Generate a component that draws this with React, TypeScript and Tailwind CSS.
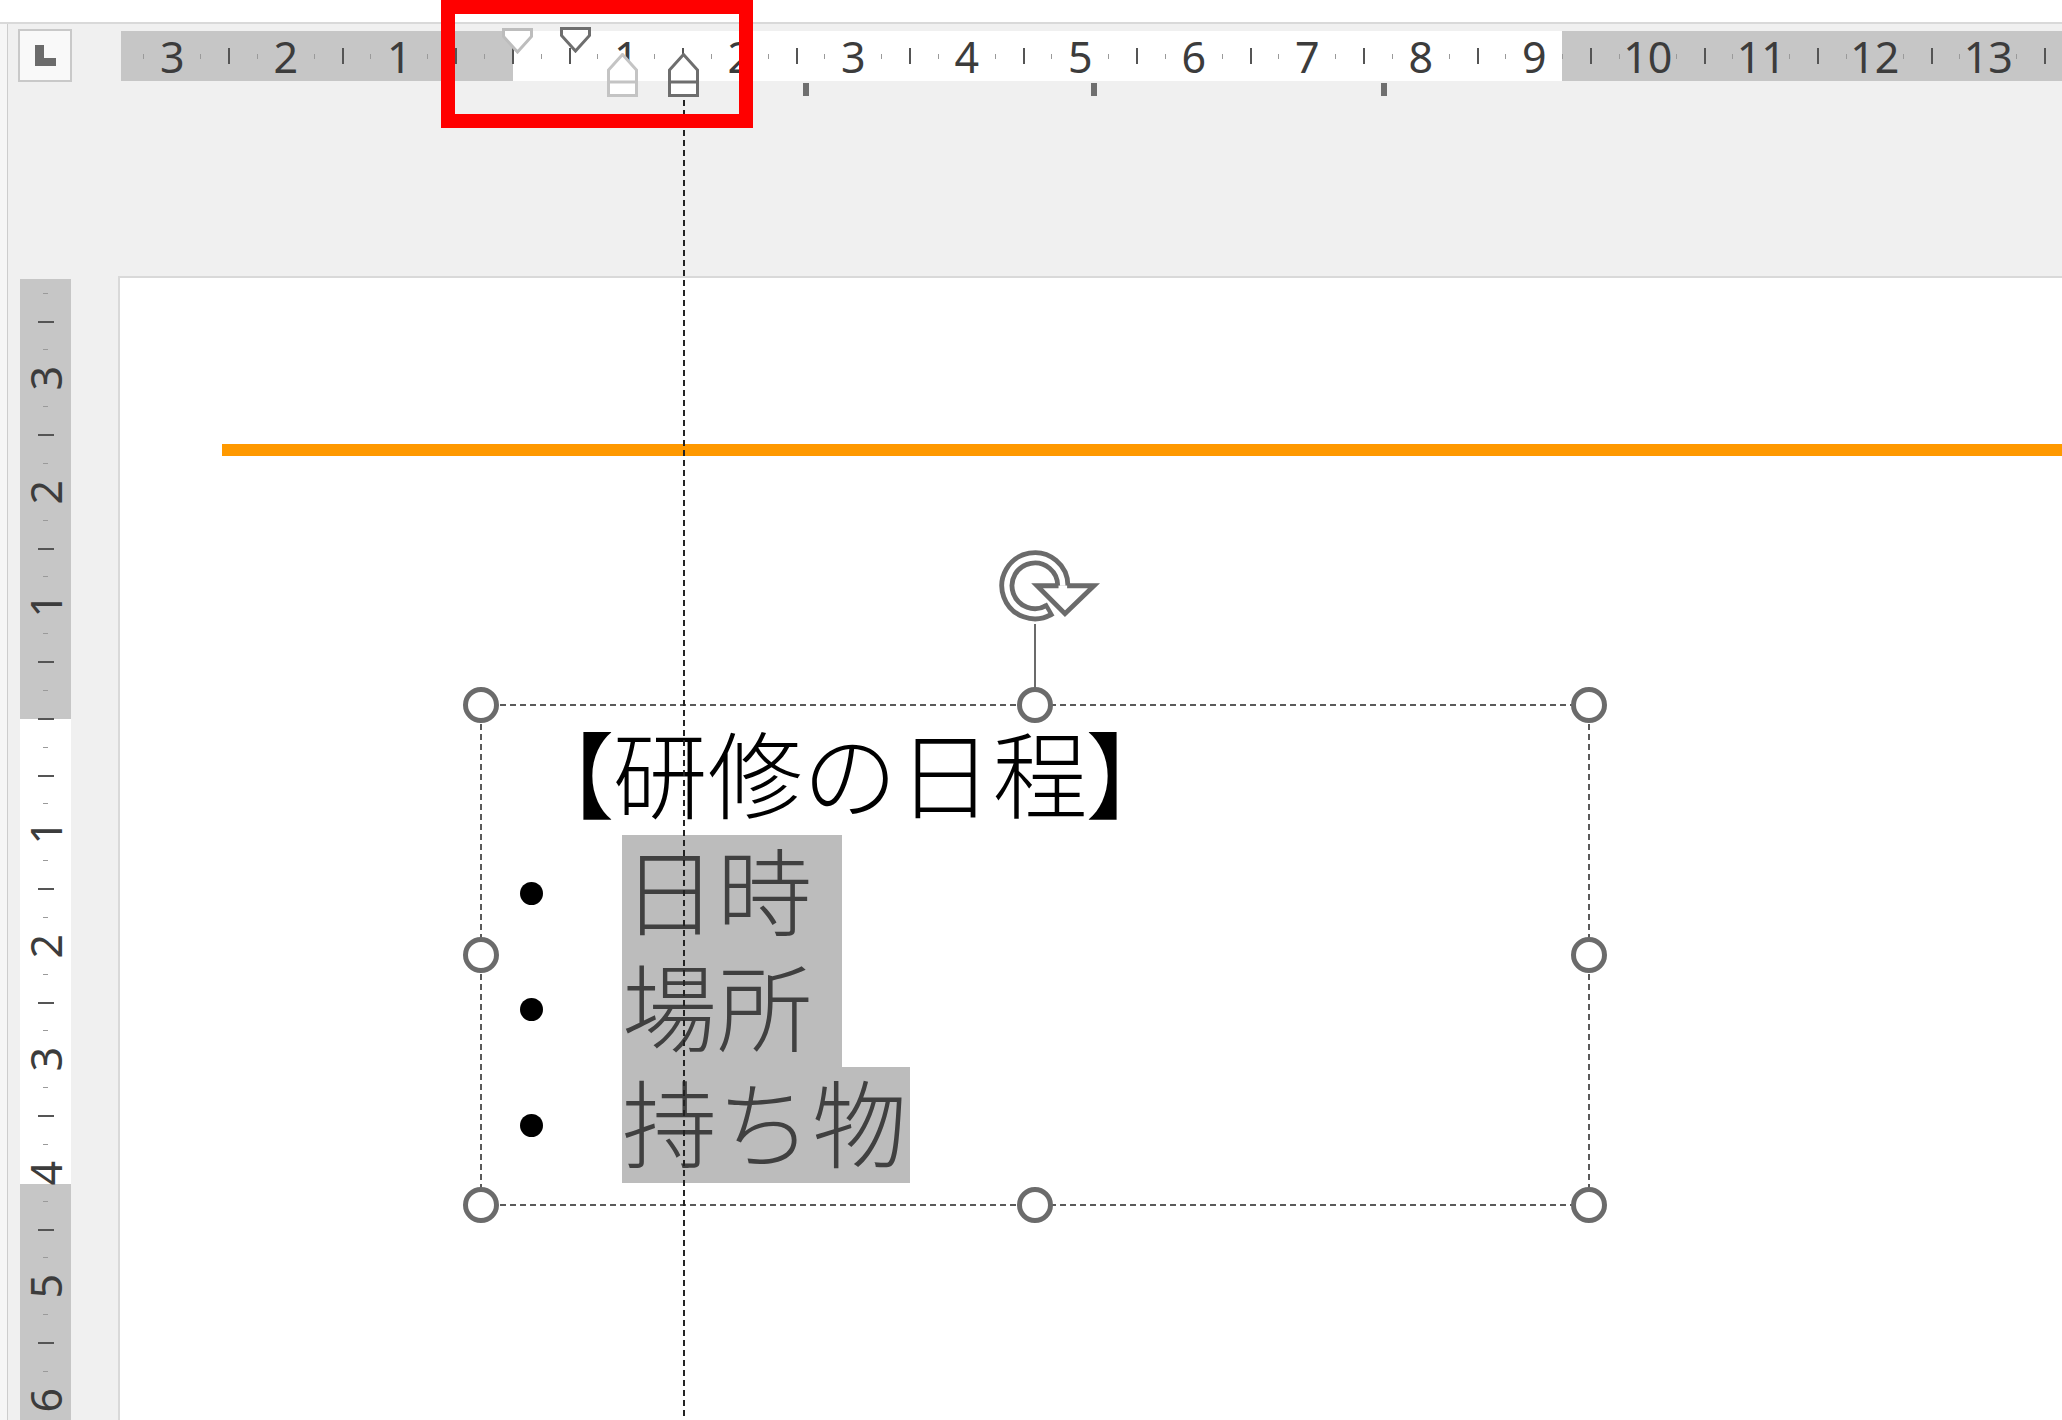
import React from 'react';

const hTicks = Array.from({ length: 68 }, (_, i) => -3.25 + i * 0.25);
const vTicks = Array.from({ length: 40 }, (_, i) => -3.75 + i * 0.25);

function HMark({ k }: { k: number }) {
  if (Number.isInteger(k) && k !== 0) {
    return (
      <span className="whitespace-nowrap text-[43px] leading-none text-[#3c3c3c] font-['Noto_Sans',sans-serif]">
        {Math.abs(k)}
      </span>
    );
  }
  if (Number.isInteger(k * 2)) return <div className="w-[2px] h-[16px] bg-[#555555]" />;
  return <div className="w-[1px] h-[5px] bg-[#9a9a9a]" />;
}

function VMark({ k }: { k: number }) {
  if (Number.isInteger(k) && k !== 0) {
    return (
      <div className="[writing-mode:vertical-rl] rotate-180 whitespace-nowrap text-[43px] leading-none text-[#3c3c3c] font-['Noto_Sans',sans-serif]">
        {Math.abs(k)}
      </div>
    );
  }
  if (Number.isInteger(k * 2)) return <div className="h-[2px] w-[16px] bg-[#555555]" />;
  return <div className="h-[1px] w-[5px] bg-[#9a9a9a]" />;
}

function DownMarker({ color }: { color: string }) {
  return (
    <svg width="31" height="26" viewBox="0 0 31 26">
      <path d="M1.5 1.5 H29.5 V8.5 L15.5 24 L1.5 8.5 Z" fill="#fff" stroke={color} strokeWidth="3" />
    </svg>
  );
}

function UpMarker({ color }: { color: string }) {
  return (
    <svg width="31" height="44" viewBox="0 0 31 44">
      <path d="M15.5 1.5 L29.5 17 V42.5 H1.5 V17 Z" fill="#fff" stroke={color} strokeWidth="3" />
      <path d="M1.5 29 H29.5" stroke={color} strokeWidth="3" />
    </svg>
  );
}

function Handle({ x, y }: { x: number; y: number }) {
  return (
    <div
      className="absolute w-[36px] h-[36px] rounded-full border-[5px] border-[#6b6b6b] bg-white"
      style={{ left: x, top: y }}
    />
  );
}

function RotateIcon() {
  return (
    <svg width="108" height="86" viewBox="0 0 100 80">
      <path d="M48 59.5 A26 26 0 1 1 61 37" fill="none" stroke="#6b6b6b" strokeWidth="14" />
      <path d="M48 59.5 A26 26 0 1 1 61 37" fill="none" stroke="#fff" strokeWidth="5" />
      <path d="M44.5 53.5 L51.5 65.6" stroke="#6b6b6b" strokeWidth="4" />
      <path d="M37 37 H90 L63 63 Z" fill="#fff" />
      <path d="M57 37 H37 L63 63 L90 37 H65" fill="none" stroke="#6b6b6b" strokeWidth="4.5" strokeLinejoin="miter" />
    </svg>
  );
}

const cjk = "font-['Noto_Sans_CJK_JP',sans-serif]";

const items = [
  { t: '日時', w: 'w-[220px]' },
  { t: '場所', w: 'w-[220px]' },
  { t: '持ち物', w: 'w-[288px]' },
];

export default function App() {
  return (
    <div className="relative w-[2062px] h-[1420px] overflow-hidden bg-[#f0f0f0] flex flex-col">
      {/* title strip */}
      <div className="h-[24px] shrink-0 bg-white border-b-2 border-[#d9d9d9]" />

      <div className="flex flex-1 min-h-0">
        {/* window frame */}
        <div className="w-[8px] shrink-0 bg-[#f6f6f6] border-r border-[#cdcdcd]" />

        <div className="flex-1 flex flex-col min-w-0">
          {/* horizontal ruler row */}
          <div className="h-[252px] shrink-0 flex items-start pt-[5px]">
            <div className="ml-[10px] w-[54px] h-[53px] shrink-0 flex items-center justify-center bg-[#f9f9f9] border-2 border-[#c9c9c9]">
              <svg width="21" height="21" viewBox="0 0 21 21">
                <path d="M0 0 H9 V13 H21 V21 H0 Z" fill="#6b6b6b" />
              </svg>
            </div>

            <div className="relative ml-[49px] mt-[2px] h-[50px] flex-1 flex items-center pl-[8.8px] bg-[linear-gradient(90deg,#c6c6c6_392px,#ffffff_392px,#ffffff_1441px,#c6c6c6_1441px)]">
              {hTicks.map((k) => (
                <div key={k} className="w-[28.375px] h-full shrink-0 flex items-center justify-center">
                  <HMark k={k} />
                </div>
              ))}

              {/* indent markers */}
              <div className="absolute left-[381px] top-[-3px]">
                <DownMarker color="#bdbdbd" />
              </div>
              <div className="absolute left-[439px] top-[-4px]">
                <DownMarker color="#6e6e6e" />
              </div>
              <div className="absolute left-[486px] top-[22px]">
                <UpMarker color="#c4c4c4" />
              </div>
              <div className="absolute left-[547px] top-[22px]">
                <UpMarker color="#6e6e6e" />
              </div>

              {/* tab stops */}
              <div className="absolute left-[682px] top-[52px] w-[6px] h-[13px] bg-[#6f6f6f]" />
              <div className="absolute left-[970px] top-[52px] w-[6px] h-[13px] bg-[#6f6f6f]" />
              <div className="absolute left-[1260px] top-[52px] w-[6px] h-[13px] bg-[#6f6f6f]" />
            </div>
          </div>

          <div className="flex flex-1 min-h-0">
            {/* vertical ruler */}
            <div className="ml-[12px] mt-[3px] w-[51px] shrink-0 overflow-hidden flex flex-col bg-[linear-gradient(180deg,#c6c6c6_440px,#ffffff_440px,#ffffff_905px,#c6c6c6_905px)]">
              {vTicks.map((k) => (
                <div key={k} className="h-[28.375px] w-full shrink-0 flex items-center justify-center">
                  <VMark k={k} />
                </div>
              ))}
            </div>

            {/* page */}
            <div className="ml-[47px] flex-1 min-w-0 bg-white border-l-2 border-t-2 border-[#d9d9d9]">
              <div className="mt-[166px] ml-[102px] h-[12px] bg-[#ff9900]" />

              <div className="relative mt-[248px] ml-[360px] w-[1110px] h-[502px] pt-[10px]">
                <div className={`pl-[85px] h-[121px] leading-[113px] text-[95px] font-light text-black whitespace-nowrap ${cjk}`}>
                  <span className="[font-feature-settings:'palt']">【</span>研修の日程<span className="[font-feature-settings:'palt']">】</span>
                </div>

                {items.map((row) => (
                  <div key={row.t} className="flex items-center h-[116px]">
                    <div className="ml-[40px] w-[23px] h-[23px] rounded-full bg-black shrink-0" />
                    <div
                      className={`ml-[79px] h-full ${row.w} bg-[#bcbcbc] text-[95px] leading-[106px] font-light text-[#404040] whitespace-nowrap ${cjk}`}
                    >
                      {row.t}
                    </div>
                  </div>
                ))}

                {/* dashed selection frame */}
                <div className="absolute left-0 top-0 w-full h-[2px] bg-[repeating-linear-gradient(90deg,#5a5a5a_0px,#5a5a5a_6px,transparent_6px,transparent_10px)]" />
                <div className="absolute left-0 bottom-0 w-full h-[2px] bg-[repeating-linear-gradient(90deg,#5a5a5a_0px,#5a5a5a_6px,transparent_6px,transparent_10px)]" />
                <div className="absolute left-0 top-0 h-full w-[2px] bg-[repeating-linear-gradient(180deg,#5a5a5a_0px,#5a5a5a_6px,transparent_6px,transparent_10px)]" />
                <div className="absolute right-0 top-0 h-full w-[2px] bg-[repeating-linear-gradient(180deg,#5a5a5a_0px,#5a5a5a_6px,transparent_6px,transparent_10px)]" />

                {/* rotation handle */}
                <div className="absolute left-[517px] top-[-158px]">
                  <RotateIcon />
                </div>
                <div className="absolute left-[554px] top-[-80px] w-[2px] h-[64px] bg-[#6b6b6b]" />

                <Handle x={-17} y={-17} />
                <Handle x={537} y={-17} />
                <Handle x={1091} y={-17} />
                <Handle x={-17} y={233} />
                <Handle x={1091} y={233} />
                <Handle x={-17} y={483} />
                <Handle x={537} y={483} />
                <Handle x={1091} y={483} />
              </div>
            </div>
          </div>
        </div>
      </div>

      {/* indent guide */}
      <div className="absolute left-[683px] top-[100px] bottom-0 w-[2px] bg-[repeating-linear-gradient(180deg,#222222_0px,#222222_6px,transparent_6px,transparent_10px)]" />

      {/* highlight box */}
      <div className="absolute left-[441px] top-0 w-[312px] h-[128px] border-[14px] border-[#ff0000]" />
    </div>
  );
}
